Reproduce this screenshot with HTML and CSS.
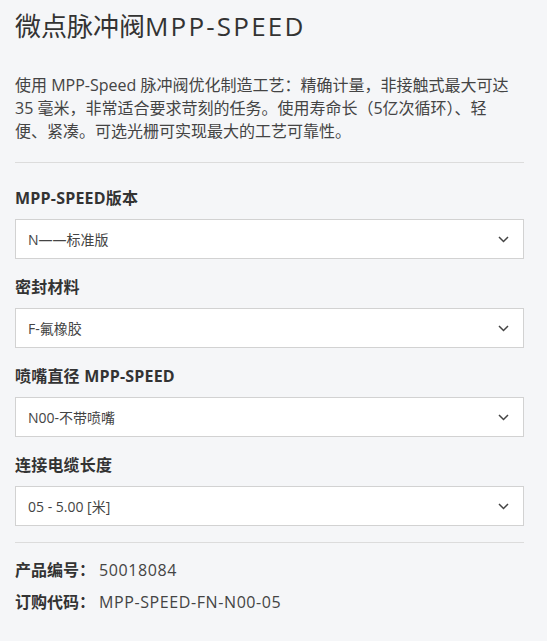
FILE: index.html
```html
<!DOCTYPE html>
<html lang="zh">

<head>
  <meta charset="UTF-8">
  <meta name="viewport" content="width=device-width, initial-scale=1.0">
  <title>微点脉冲阀MPP-SPEED</title>
  <link rel="stylesheet" href="styles.css">
</head>

<body>
  <div class="product">
    <h1 class="product-title">微点脉冲阀<span class="model">MPP-SPEED</span></h1>
    <p class="product-desc">使用 MPP-Speed 脉冲阀优化制造工艺：精确计量，非接触式最大可达 35 毫米，非常适合要求苛刻的任务。使用寿命长（5亿次循环）、轻便、紧凑。可选光栅可实现最大的工艺可靠性。</p>
    <div class="divider"></div>

    <div class="options">
      <div class="option">
        <label class="option-label">MPP-SPEED版本</label>
        <div class="select">
          <span>N——标准版</span>
          <svg class="chevron" viewBox="0 0 11 7"><path d="M1 1l4.5 4.5L10 1" /></svg>
        </div>
      </div>

      <div class="option">
        <label class="option-label">密封材料</label>
        <div class="select">
          <span>F-氟橡胶</span>
          <svg class="chevron" viewBox="0 0 11 7"><path d="M1 1l4.5 4.5L10 1" /></svg>
        </div>
      </div>

      <div class="option">
        <label class="option-label">喷嘴直径 MPP-SPEED</label>
        <div class="select">
          <span>N00-不带喷嘴</span>
          <svg class="chevron" viewBox="0 0 11 7"><path d="M1 1l4.5 4.5L10 1" /></svg>
        </div>
      </div>

      <div class="option">
        <label class="option-label">连接电缆长度</label>
        <div class="select">
          <span>05 - 5.00 [米]</span>
          <svg class="chevron" viewBox="0 0 11 7"><path d="M1 1l4.5 4.5L10 1" /></svg>
        </div>
      </div>
    </div>
    <div class="divider"></div>

    <div class="info">
      <div class="info-row"><b>产品编号：</b><span>50018084</span></div>
      <div class="info-row"><b>订购代码：</b><span>MPP-SPEED-FN-N00-05</span></div>
    </div>
  </div>
</body>

</html>
```

FILE: styles.css
```css
body {
  margin: 0;
  background-color: #f5f6f8;
  font-family: 'Open Sans', 'Noto Sans CJK SC', sans-serif;
  color: #333;
}

.product {
  padding: 0 23px 0 15px;
}

.product-title {
  margin: 8px 0 0;
  font-size: 26px;
  font-weight: normal;
  line-height: 36px;
  color: #333;
}

.product-title .model {
  letter-spacing: 2.2px;
}

.product-desc {
  margin: 30px 6px 0 0;
  padding-bottom: 19px;
  font-size: 16px;
  line-height: 23px;
  color: #444;
}

.divider {
  height: 1px;
  background: #dcdcdc;
}

.options {
  padding: 13px 0 16px;
}

.option {
  display: flex;
  flex-direction: column;
  gap: 10px;
  margin-top: 17px;
}

.option:first-child {
  margin-top: 11px;
}

.option-label {
  font-size: 16px;
  font-weight: bold;
  line-height: 22px;
  letter-spacing: 0.2px;
  color: #333;
}

.select {
  display: flex;
  align-items: center;
  justify-content: space-between;
  height: 40px;
  box-sizing: border-box;
  padding: 0 14px 0 12px;
  background: white;
  border: 1px solid #d2d2d2;
  font-size: 14px;
  color: #444;
}

.chevron {
  width: 11px;
  height: 7px;
  fill: none;
  stroke: #444;
  stroke-width: 1.5;
}

.info {
  padding-top: 16px;
  display: flex;
  flex-direction: column;
  gap: 10px;
}

.info-row {
  display: flex;
  font-size: 16px;
  line-height: 22px;
}

.info-row b {
  width: 84px;
  color: #333;
}

.info-row span {
  color: #444;
  letter-spacing: 0.6px;
}
```
